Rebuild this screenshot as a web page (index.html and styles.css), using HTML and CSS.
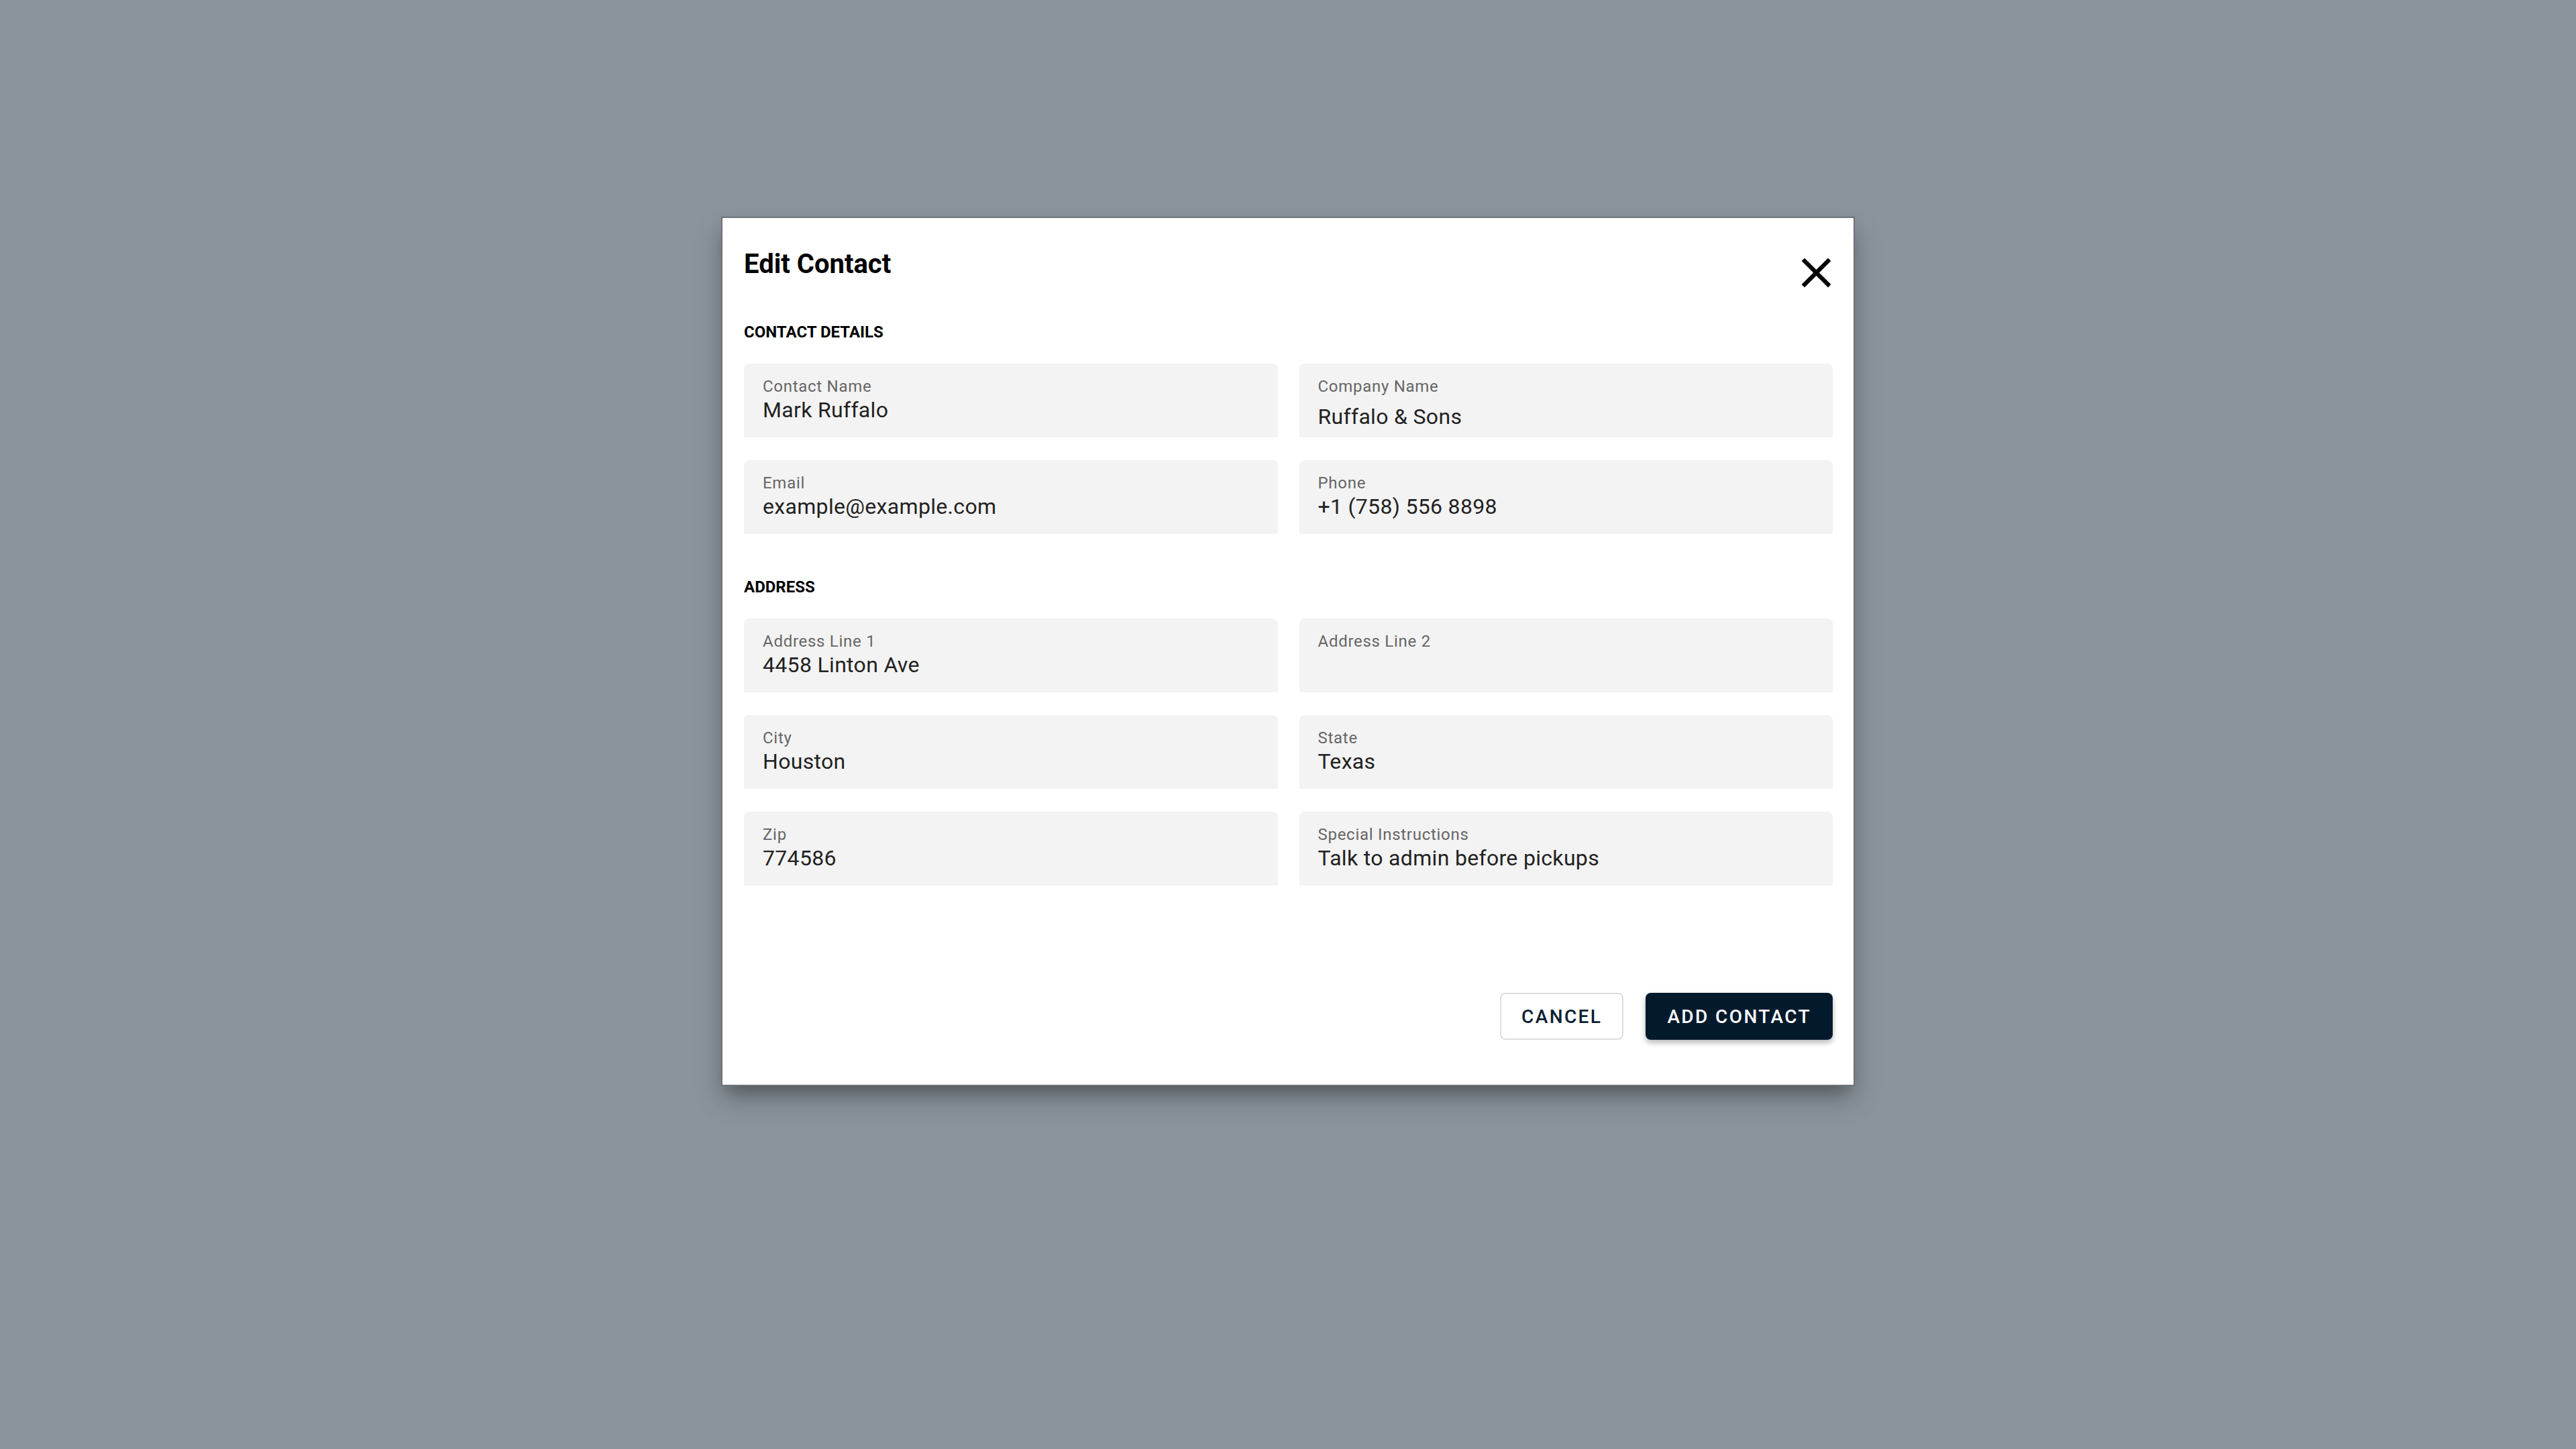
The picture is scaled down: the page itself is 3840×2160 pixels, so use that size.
FILE: index.html
```html
<!DOCTYPE html>
<html lang="en">
<head>
<meta charset="utf-8">
<title>Edit Contact</title>
<link rel="stylesheet" href="styles.css">
</head>
<body>
<div class="backdrop">
  <div class="dialog">
    <div class="dialog-header">
      <h2 class="dialog-title">Edit Contact</h2>
      <button class="close-btn" aria-label="Close">
        <svg viewBox="0 0 24 24" width="75" height="75"><path d="M19 6.41L17.59 5 12 10.59 6.41 5 5 6.41 10.59 12 5 17.59 6.41 19 12 13.41 17.59 19 19 17.59 13.41 12z" fill="#000"/></svg>
      </button>
    </div>

    <h3 class="section-title">CONTACT DETAILS</h3>
    <div class="field-grid">
      <div class="field"><div class="field-label">Contact Name</div><div class="field-value">Mark Ruffalo</div></div>
      <div class="field"><div class="field-label">Company Name</div><div class="field-value field-value-low">Ruffalo &amp; Sons</div></div>
      <div class="field"><div class="field-label">Email</div><div class="field-value">example@example.com</div></div>
      <div class="field"><div class="field-label">Phone</div><div class="field-value">+1 (758) 556 8898</div></div>
    </div>

    <h3 class="section-title section-title-spaced">ADDRESS</h3>
    <div class="field-grid">
      <div class="field"><div class="field-label">Address Line 1</div><div class="field-value">4458 Linton Ave</div></div>
      <div class="field"><div class="field-label">Address Line 2</div><div class="field-value"></div></div>
      <div class="field"><div class="field-label">City</div><div class="field-value">Houston</div></div>
      <div class="field"><div class="field-label">State</div><div class="field-value">Texas</div></div>
      <div class="field"><div class="field-label">Zip</div><div class="field-value">774586</div></div>
      <div class="field"><div class="field-label">Special Instructions</div><div class="field-value">Talk to admin before pickups</div></div>
    </div>

    <div class="actions">
      <button class="btn btn-outline">CANCEL</button>
      <button class="btn btn-primary">ADD CONTACT</button>
    </div>
  </div>
</div>
</body>
</html>
```

FILE: styles.css
```css
html, body {
  margin: 0;
  padding: 0;
}
body {
  background: #8a949c;
  font-family: Roboto, "Liberation Sans", Arial, sans-serif;
  width: 3840px;
  height: 2160px;
  overflow: hidden;
}
.backdrop {
  display: flex;
  justify-content: center;
  align-items: flex-start;
  padding-top: 323px;
  box-sizing: border-box;
  height: 2160px;
}
.dialog {
  width: 1690px;
  height: 1296px;
  box-sizing: border-box;
  background: #ffffff;
  border: 2px solid #6f7378;
  box-shadow: 0 22px 38px 4px rgba(0,0,0,0.14), 0 16px 26px -10px rgba(0,0,0,0.35);
  padding: 45px 31px 0 32px;
  display: flex;
  flex-direction: column;
}
.dialog-header {
  display: flex;
  justify-content: space-between;
  align-items: flex-start;
  height: 74px;
}
.dialog-title {
  margin: 0;
  font-size: 40px;
  line-height: 48px;
  font-weight: 700;
  color: #000;
}
.close-btn {
  border: 0;
  background: transparent;
  padding: 0;
  margin: -1px -13px 0 0;
  width: 75px;
  height: 75px;
  display: flex;
}
.section-title {
  margin: 37px 0 0 0;
  font-size: 24px;
  line-height: 28px;
  font-weight: 700;
  color: #000;
}
.section-title-spaced {
  margin-top: 65px;
}
.field-grid {
  margin-top: 33px;
  display: grid;
  grid-template-columns: 1fr 1fr;
  column-gap: 32px;
  row-gap: 34px;
}
.field {
  height: 110px;
  box-sizing: border-box;
  background: #f3f3f3;
  border-radius: 8px 8px 0 0;
  padding: 20px 26px 0 28px;
}
.field-label {
  font-size: 24px;
  line-height: 28px;
  letter-spacing: 0.03em;
  color: #666666;
}
.field-value {
  margin-top: 2px;
  font-size: 32px;
  line-height: 38px;
  letter-spacing: 0.01em;
  color: #222222;
  min-height: 38px;
}
.field-value-low {
  margin-top: 12px;
}
.actions {
  margin-top: 160px;
  display: flex;
  justify-content: flex-end;
  gap: 33px;
}
.btn {
  height: 70px;
  box-sizing: border-box;
  font-family: Roboto, "Liberation Sans", Arial, sans-serif;
  font-size: 28px;
  font-weight: 500;
  letter-spacing: 2.4px;
  border-radius: 8px;
  cursor: pointer;
}
.btn-outline {
  background: #ffffff;
  border: 2px solid #dedede;
  color: #0b1f33;
  padding: 0 30px;
}
.btn-primary {
  background: #031a2d;
  border: 0;
  color: #ffffff;
  padding: 0 32px;
  box-shadow: 0 4px 8px rgba(0,0,0,0.3);
}
```
